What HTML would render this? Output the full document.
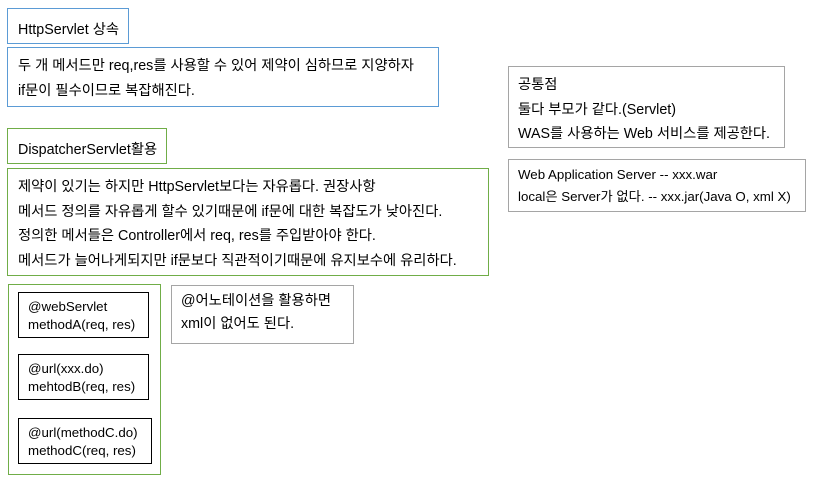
<!DOCTYPE html>
<html><head><meta charset="utf-8"><style>
body{margin:0;width:816px;height:485px;background:#fff;position:relative;overflow:hidden;font-family:"Liberation Sans","Noto Sans CJK KR",sans-serif;font-size:14.3px;color:#000;}
.b{position:absolute;box-sizing:border-box;white-space:nowrap;}
.blue{border:1px solid #5b9bd5}
.green{border:1px solid #70ad47}
.gray{border:1px solid #a5a5a5}
.blk{border:1px solid #000;font-size:13.3px}
</style></head><body>
<div class="b blue" style="left:7px;top:8px;width:122px;height:36px;padding:9px 0 0 10px">HttpServlet 상속</div>
<div class="b blue" style="left:7px;top:47px;width:432px;height:60px;padding:6px 0 0 10px;line-height:25px">두 개 메서드만 req,res를 사용할 수 있어 제약이 심하므로 지양하자<br>if문이 필수이므로 복잡해진다.</div>
<div class="b green" style="left:7px;top:128px;width:160px;height:36px;padding:9px 0 0 10px">DispatcherServlet활용</div>
<div class="b green" style="left:7px;top:168px;width:482px;height:108px;padding:6px 0 0 10px;line-height:24.5px">제약이 있기는 하지만 HttpServlet보다는 자유롭다. 권장사항<br>메서드 정의를 자유롭게 할수 있기때문에 if문에 대한 복잡도가 낮아진다.<br>정의한 메서들은 Controller에서 req, res를 주입받아야 한다.<br>메서드가 늘어나게되지만 if문보다 직관적이기때문에 유지보수에 유리하다.</div>
<div class="b green" style="left:8px;top:284px;width:153px;height:191px"></div>
<div class="b blk" style="left:18px;top:292px;width:131px;height:46px;padding:5px 0 0 9px;line-height:18px">@webServlet<br>methodA(req, res)</div>
<div class="b blk" style="left:18px;top:354px;width:131px;height:46px;padding:5px 0 0 9px;line-height:18px">@url(xxx.do)<br>mehtodB(req, res)</div>
<div class="b blk" style="left:18px;top:418px;width:134px;height:46px;padding:5px 0 0 9px;line-height:18px">@url(methodC.do)<br>methodC(req, res)</div>
<div class="b gray" style="left:171px;top:285px;width:183px;height:59px;padding:4px 0 0 9px;line-height:23px">@어노테이션을 활용하면<br>xml이 없어도 된다.</div>
<div class="b gray" style="left:508px;top:66px;width:277px;height:82px;padding:6px 0 0 9px;line-height:24.5px">공통점<br>둘다 부모가 같다.(Servlet)<br>WAS를 사용하는 Web 서비스를 제공한다.</div>
<div class="b gray" style="left:508px;top:159px;width:298px;height:53px;padding:4px 0 0 9px;line-height:22px;font-size:13.3px">Web Application Server -- xxx.war<br>local은 Server가 없다. -- xxx.jar(Java O, xml X)</div>
</body></html>
